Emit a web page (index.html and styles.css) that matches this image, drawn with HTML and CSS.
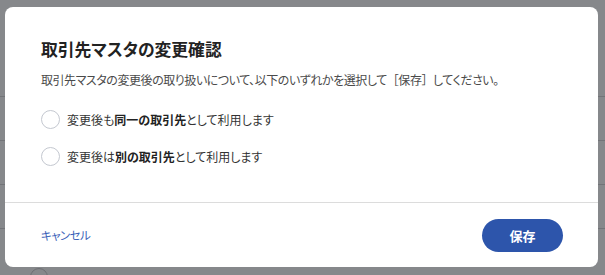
FILE: index.html
```html
<!DOCTYPE html>
<html lang="ja">
<head>
<meta charset="utf-8">
<link rel="stylesheet" href="styles.css">
</head>
<body>
<div class="page">
  <div class="bg-row"></div>
  <div class="bg-row"></div>
  <div class="bg-row"></div>
  <div class="bg-row"></div>
  <div class="bg-radio"></div>
</div>
<div class="overlay">
  <div class="dialog" role="dialog">
    <div class="dialog-body">
      <h2 class="title">取引先マスタの変更確認</h2>
      <p class="desc">取引先マスタの変更後の取り扱いについて、以下のいずれかを選択して<span class="wide">［保存］</span>してください。</p>
      <div class="options">
        <label class="option"><span class="radio"></span><span class="label">変更後も<b>同一の取引先</b>として利用します</span></label>
        <label class="option"><span class="radio"></span><span class="label">変更後は<b>別の取引先</b>として利用します</span></label>
      </div>
    </div>
    <div class="dialog-footer">
      <a class="cancel">キャンセル</a>
      <button class="save">保存</button>
    </div>
  </div>
</div>
</body>
</html>
```
FILE: styles.css
```css
html, body {
  margin: 0;
  padding: 0;
}
body {
  width: 605px;
  height: 275px;
  overflow: hidden;
  background: #86888b;
  font-family: "Noto Sans CJK JP", "Noto Sans", sans-serif;
  font-feature-settings: "palt";
  position: relative;
}
.page {
  padding-top: 96px;
  display: flex;
  flex-direction: column;
}
.bg-row {
  height: 44px;
  border-top: 1px solid #727478;
  box-sizing: border-box;
}
.bg-radio {
  position: absolute;
  left: 30px;
  top: 268px;
  width: 16px;
  height: 16px;
  border: 1px solid #6d6f73;
  border-radius: 50%;
}
.overlay {
  position: absolute;
  inset: 0;
}
.dialog {
  position: absolute;
  left: 5px;
  top: 7px;
  width: 593px;
  height: 260px;
  background: #fff;
  border-radius: 8px;
  display: flex;
  flex-direction: column;
}
.dialog-body {
  padding: 30px 36px 0;
  height: 196px;
  box-sizing: border-box;
  border-bottom: 1px solid #dcdcdc;
}
.title {
  margin: 0;
  font-size: 16.8px;
  line-height: 24px;
  font-weight: 700;
  color: #222;
}
.desc {
  margin: 10px 0 0;
  font-size: 12px;
  line-height: 18px;
  color: #4a4a4a;
  letter-spacing: -0.45px;
}
.desc .wide {
  font-feature-settings: normal;
}
.options {
  margin-top: 20px;
  display: flex;
  flex-direction: column;
  gap: 17px;
}
.option {
  display: flex;
  align-items: center;
  gap: 7px;
  height: 20px;
  font-size: 12px;
  color: #333;
}
.option b {
  font-weight: 700;
  color: #222;
}
.radio {
  width: 17px;
  height: 17px;
  border: 1px solid #c4c8d0;
  border-radius: 50%;
  box-sizing: content-box;
  flex: none;
}
.dialog-footer {
  flex: 1;
  display: flex;
  align-items: center;
  justify-content: space-between;
  padding: 0 35px 0 36px;
}
.cancel {
  font-size: 11.5px;
  letter-spacing: -0.6px;
  color: #3b62b8;
  cursor: pointer;
}
.save {
  width: 81px;
  height: 33px;
  border: none;
  border-radius: 17px;
  background: #2d55ab;
  color: #fff;
  font-family: inherit;
  font-size: 13px;
  font-weight: 700;
}
```
